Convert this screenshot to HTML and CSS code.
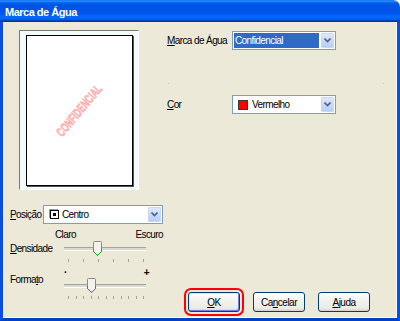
FILE: index.html
```html
<!DOCTYPE html>
<html lang="pt">
<head>
    <meta charset="UTF-8">
    <meta name="viewport" content="width=device-width, initial-scale=1.0">
    <title>Marca de Água</title>
    <link rel="stylesheet" href="styles.css">
</head>
<body>
    <div class="window">
        <div class="titlebar">Marca de Água</div>
        <div class="frame">
            <div class="client">
                <div class="top">
                    <div class="preview">
                        <div class="page">
                            <span class="watermark">CONFIDENCIAL</span>
                        </div>
                    </div>

                    <div class="fields">
                        <div class="field">
                            <span class="label"><u>M</u>arca de Água</span>
                            <div class="combo">
                                <span class="combo-value selected">Confidencial</span>
                                <span class="combo-arrow">
                                    <svg width="7" height="5" viewBox="0 0 7 5"><path d="M0.5 0.5 L3.5 3.5 L6.5 0.5" fill="none" stroke="#4d6185" stroke-width="1.6"/></svg>
                                </span>
                            </div>
                        </div>
                        <div class="dots"><i></i><i></i></div>
                        <div class="field">
                            <span class="label"><u>C</u>or</span>
                            <div class="combo">
                                <span class="combo-value"><span class="swatch"></span>Vermelho</span>
                                <span class="combo-arrow">
                                    <svg width="7" height="5" viewBox="0 0 7 5"><path d="M0.5 0.5 L3.5 3.5 L6.5 0.5" fill="none" stroke="#4d6185" stroke-width="1.6"/></svg>
                                </span>
                            </div>
                        </div>
                    </div>
                </div>

                <div class="bottom">
                    <div class="controls">
                        <div class="pos-row">
                            <span class="label"><u>P</u>osição</span>
                            <div class="combo combo-pos">
                                <span class="combo-value"><span class="pos-icon"></span>Centro</span>
                                <span class="combo-arrow">
                                    <svg width="7" height="5" viewBox="0 0 7 5"><path d="M0.5 0.5 L3.5 3.5 L6.5 0.5" fill="none" stroke="#4d6185" stroke-width="1.6"/></svg>
                                </span>
                            </div>
                        </div>

                        <div class="slider-group">
                            <div class="scale"><span>Claro</span><span>Escuro</span></div>
                            <span class="label slider-label"><u>D</u>ensidade</span>
                            <div class="track-area">
                                <div class="track"></div>
                                <svg class="thumb" style="left: 38px" width="9" height="15" viewBox="0 0 9 15">
                                    <path d="M0.5 1.5 Q0.5 0.5 1.5 0.5 H7.5 Q8.5 0.5 8.5 1.5 V10.5 L4.5 14.5 L0.5 10.5 Z" fill="#f4f3ee" stroke="#8c8a80"/>
                                    <path d="M0.5 8 V10.5 L4.5 14.5 L8.5 10.5 V8" fill="none" stroke="#21a121"/>
                                </svg>
                            </div>
                            <div class="ticks">
                                <i></i><i></i><i></i><i></i><i></i><i></i>
                            </div>
                        </div>

                        <div class="slider-group formato">
                            <div class="marks"><span class="dot">·</span><span class="plus">+</span></div>
                            <span class="label slider-label">Forma<u>t</u>o</span>
                            <div class="track-area">
                                <div class="track"></div>
                                <svg class="thumb" style="left: 32px" width="9" height="15" viewBox="0 0 9 15">
                                    <path d="M0.5 1.5 Q0.5 0.5 1.5 0.5 H7.5 Q8.5 0.5 8.5 1.5 V10.5 L4.5 14.5 L0.5 10.5 Z" fill="#f4f3ee" stroke="#8c8a80"/>
                                    <path d="M0.5 8 V10.5 L4.5 14.5 L8.5 10.5 V8" fill="none" stroke="#21a121"/>
                                </svg>
                            </div>
                            <div class="ticks">
                                <i></i><i></i><i></i><i></i><i></i><i></i><i></i><i></i><i></i><i></i><i></i>
                            </div>
                        </div>
                    </div>

                    <div class="buttons">
                        <button class="btn btn-default"><u>O</u>K</button>
                        <button class="btn">Ca<u>n</u>celar</button>
                        <button class="btn"><u>A</u>juda</button>
                    </div>
                </div>
            </div>
        </div>
    </div>
</body>
</html>
```

FILE: styles.css
```css
body {
    margin: 0;
    background: #fff;
    font-family: "Liberation Sans", Arial, sans-serif;
    font-size: 10px;
    letter-spacing: -0.6px;
    color: #000;
}
u {
    text-decoration: underline;
    text-underline-offset: 1px;
}
.window {
    width: 400px;
    height: 321px;
    display: flex;
    flex-direction: column;
}
.titlebar {
    height: 22px;
    box-sizing: border-box;
    padding: 2px 0 0 5px;
    line-height: 20px;
    color: #fff;
    font-size: 11px;
    font-weight: bold;
    letter-spacing: -0.5px;
    border-top-right-radius: 7px;
    background: linear-gradient(to bottom, #0058ee 0%, #3593ff 4%, #288eff 6%, #127dff 8%, #036ffc 10%, #0262ee 14%, #0057e5 20%, #0054e3 24%, #0055eb 56%, #005bf5 66%, #026afe 76%, #0062ef 86%, #0052d6 92%, #0040ab 94%, #003092 100%);
}
.frame {
    flex: 1;
    display: flex;
    border: 3px solid #0054e3;
    border-top: none;
    border-left-color: #0a4de0;
    border-bottom-color: #0041c8;
}
.client {
    flex: 1;
    display: flex;
    flex-direction: column;
    background: #ece9d8;
    box-shadow: inset -1px -1px 0 #fffdf2;
}

/* top part */
.top {
    display: flex;
    height: 183px;
    box-sizing: border-box;
    padding: 8px 0 0 16px;
}
.preview {
    width: 120px;
    height: 160px;
    box-sizing: border-box;
    display: flex;
    padding: 4px 5px 3px 6px;
    border: 1px solid;
    border-color: #7a7a74 #fff #fff #7a7a74;
    background: #f3fbfb;
}
.page {
    flex: 1;
    display: flex;
    align-items: center;
    justify-content: center;
    overflow: hidden;
    background: #fff;
    border: 1px solid #000;
    box-shadow: 1px 1px 0 #555;
}
.watermark {
    color: #ffb0b0;
    font-size: 13px;
    font-weight: bold;
    letter-spacing: 0;
    white-space: nowrap;
    -webkit-text-stroke: 0.6px #ffb0b0;
    transform: rotate(-50deg) scaleX(0.64);
}
.fields {
    width: 217px;
    margin-left: 28px;
}
.field {
    display: flex;
    align-items: center;
    margin-top: 1px;
}
.field + .dots + .field {
    margin-top: 11px;
}
.field .label {
    width: 65px;
}
.dots {
    display: flex;
    justify-content: space-between;
    padding-left: 1px;
    margin-top: 33px;
    height: 1px;
}
.dots i {
    width: 1px;
    height: 1px;
    background: #c4c2b6;
}

/* combo boxes */
.combo {
    width: 104px;
    height: 19px;
    box-sizing: border-box;
    display: flex;
    border: 1px solid #7f9db9;
    background: #fff;
}
.combo-value {
    flex: 1;
    display: flex;
    align-items: center;
    margin: 1px;
    padding-left: 1px;
}
.combo-value.selected {
    background: #316ac5;
    color: #fff;
}
.combo-arrow {
    width: 13px;
    margin: 1px;
    display: flex;
    align-items: center;
    justify-content: center;
    border-radius: 2px;
    background: linear-gradient(to bottom, #e1eafe, #b6caf6);
    box-shadow: inset 0 0 0 1px #c8d7fb;
}
.swatch {
    width: 8px;
    height: 8px;
    margin: 0 4px 0 3px;
    background: #ff0000;
    border: 1px solid #3a3a3a;
}
.combo-pos {
    width: 120px;
}
.pos-icon {
    width: 7px;
    height: 7px;
    margin: 0 3px 0 4px;
    position: relative;
    background: #fff;
    border: 1px solid #000;
    box-shadow: -1px -1px 0 #9a9a9a;
}
.pos-icon::after {
    content: "";
    position: absolute;
    left: 2px;
    top: 2px;
    width: 3px;
    height: 3px;
    background: #000;
}

/* bottom part */
.bottom {
    flex: 1;
    display: flex;
}
.controls {
    padding-left: 7px;
}
.pos-row {
    display: flex;
    align-items: center;
}
.pos-row .label {
    width: 33px;
}
.slider-group {
    display: grid;
    grid-template-columns: 45px 108px;
    grid-template-rows: 12px 16px auto;
    margin-top: 5px;
}
.slider-group.formato {
    grid-template-rows: 10px 16px auto;
    margin-top: 6px;
}
.scale, .marks {
    grid-column: 2;
    grid-row: 1;
    display: flex;
    justify-content: space-between;
    line-height: 12px;
}
.marks {
    padding: 0 14px 0 9px;
    line-height: 10px;
    font-weight: bold;
}
.slider-label {
    grid-column: 1;
    grid-row: 2;
    align-self: center;
    line-height: 12px;
}
.formato .slider-label {
    align-self: start;
    margin-top: -4px;
}
.track-area {
    grid-column: 2;
    grid-row: 2;
    position: relative;
    display: flex;
    align-items: center;
}
.track {
    margin-left: 9px;
    width: 82px;
    height: 2px;
    border-top: 1px solid #a4a3a0;
    border-bottom: 1px solid #fff;
    background: #dcdad0;
}
.thumb {
    position: absolute;
    top: 0;
}
.ticks {
    grid-column: 2;
    grid-row: 3;
    display: flex;
    justify-content: space-between;
    margin: 2px 0 0 13px;
    width: 76px;
}
.ticks i {
    width: 1px;
    height: 3px;
    background: #a3a29a;
}

/* buttons */
.buttons {
    display: flex;
    gap: 13px;
    align-self: flex-end;
    margin: 0 27px 6px auto;
}
.btn {
    width: 52px;
    height: 20px;
    padding: 0;
    font-family: "Liberation Sans", Arial, sans-serif;
    font-size: 10px;
    letter-spacing: -0.5px;
    color: #000;
    border: 1px solid #003c74;
    border-radius: 3px;
    background: linear-gradient(to bottom, #fff 0%, #f3f2ed 40%, #ecebe6 85%, #d6d0c5 100%);
}
.btn-default {
    box-shadow: inset 1px 1px 0 #cee7ff, inset -1px -1px 0 #6982ee;
    outline: 2px solid #ff0000;
    outline-offset: 2px;
}
```
